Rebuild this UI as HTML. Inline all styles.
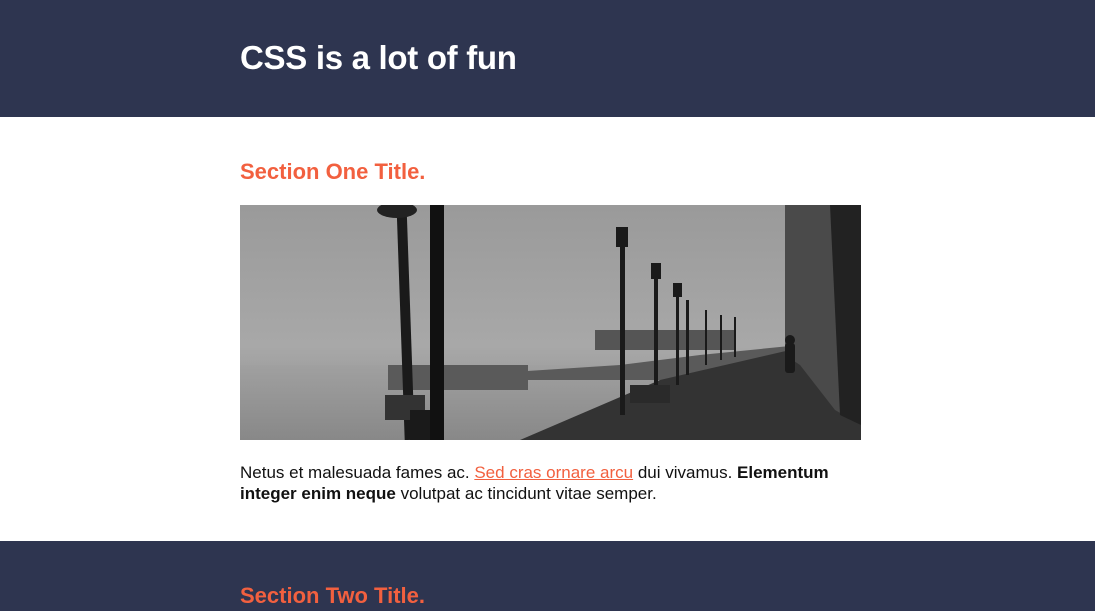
<!DOCTYPE html>
<html><head><meta charset="utf-8"><style>
*{margin:0;padding:0;box-sizing:border-box}
body{width:1095px;height:611px;overflow:hidden;font-family:"Liberation Sans",sans-serif;background:#fff}
.hdr{background:#2e3550;height:117px;position:relative}
.hdr h1{position:absolute;left:240px;top:38px;color:#fff;font-size:33px;font-weight:bold;letter-spacing:-0.3px;line-height:40px}
.s1{position:relative;height:424px}
h2{position:absolute;left:240px;color:#f2603f;font-size:22px;font-weight:bold;letter-spacing:0;line-height:26px}
.img{position:absolute;left:240px;top:88px;width:621px;height:235px}
p{position:absolute;left:240px;top:345px;font-size:17px;line-height:21px;color:#111;white-space:nowrap;letter-spacing:0}
a{color:#f2603f}
.s2{background:#2e3550;height:70px;position:relative}
</style></head><body>
<div class="hdr"><h1>CSS is a lot of fun</h1></div>
<div class="s1">
<h2 style="top:42px">Section One Title.</h2>
<svg class="img" viewBox="0 0 621 235">
<defs><linearGradient id="sky" x1="0" y1="0" x2="0" y2="1"><stop offset="0" stop-color="#9a9a9a"/><stop offset="0.6" stop-color="#a8a8a8"/><stop offset="1" stop-color="#8a8a8a"/></linearGradient>
<linearGradient id="wat" x1="0" y1="0" x2="0" y2="1"><stop offset="0" stop-color="#a0a0a0"/><stop offset="1" stop-color="#888"/></linearGradient></defs>
<rect width="621" height="235" fill="url(#sky)"/>
<rect y="160" width="621" height="75" fill="url(#wat)"/>
<path d="M150 175 L380 160 L460 150 L560 140 L560 175 Z" fill="#5a5a5a"/>
<path d="M280 235 L420 175 L550 145 L621 150 L621 235 Z" fill="#333"/>
<path d="M545 0 L621 0 L621 220 L595 205 L560 160 L545 150 Z" fill="#4a4a4a"/>
<path d="M590 0 L621 0 L621 220 L600 210 Z" fill="#222"/>
<rect x="148" y="160" width="140" height="25" fill="#5a5a5a"/>
<rect x="355" y="125" width="140" height="20" fill="#555"/>
<rect x="160" y="0" width="10" height="235" fill="#1a1a1a" transform="rotate(-2 165 100)"/>
<ellipse cx="157" cy="5" rx="20" ry="8" fill="#222"/>
<rect x="190" y="0" width="14" height="235" fill="#111"/>
<rect x="145" y="190" width="40" height="25" fill="#333"/>
<rect x="170" y="205" width="20" height="30" fill="#1a1a1a"/>
<g fill="#1a1a1a">
<rect x="380" y="30" width="5" height="180"/><rect x="376" y="22" width="12" height="20"/>
<rect x="414" y="65" width="4" height="125"/><rect x="411" y="58" width="10" height="16"/>
<rect x="436" y="85" width="3" height="95"/><rect x="433" y="78" width="9" height="14"/>
<rect x="446" y="95" width="3" height="75"/>
<rect x="465" y="105" width="2" height="55"/><rect x="480" y="110" width="2" height="45"/>
<rect x="494" y="112" width="2" height="40"/>
<rect x="545" y="138" width="10" height="30" rx="3"/><circle cx="550" cy="135" r="5"/>
<rect x="390" y="180" width="40" height="18" fill="#2a2a2a"/>
</g>
</svg>
<p>Netus et malesuada fames ac. <a href="#">Sed cras ornare arcu</a> dui vivamus. <b>Elementum</b><br><b>integer enim neque</b> volutpat ac tincidunt vitae semper.</p>
</div>
<div class="s2"><h2 style="top:42px">Section Two Title.</h2></div>
</body></html>
